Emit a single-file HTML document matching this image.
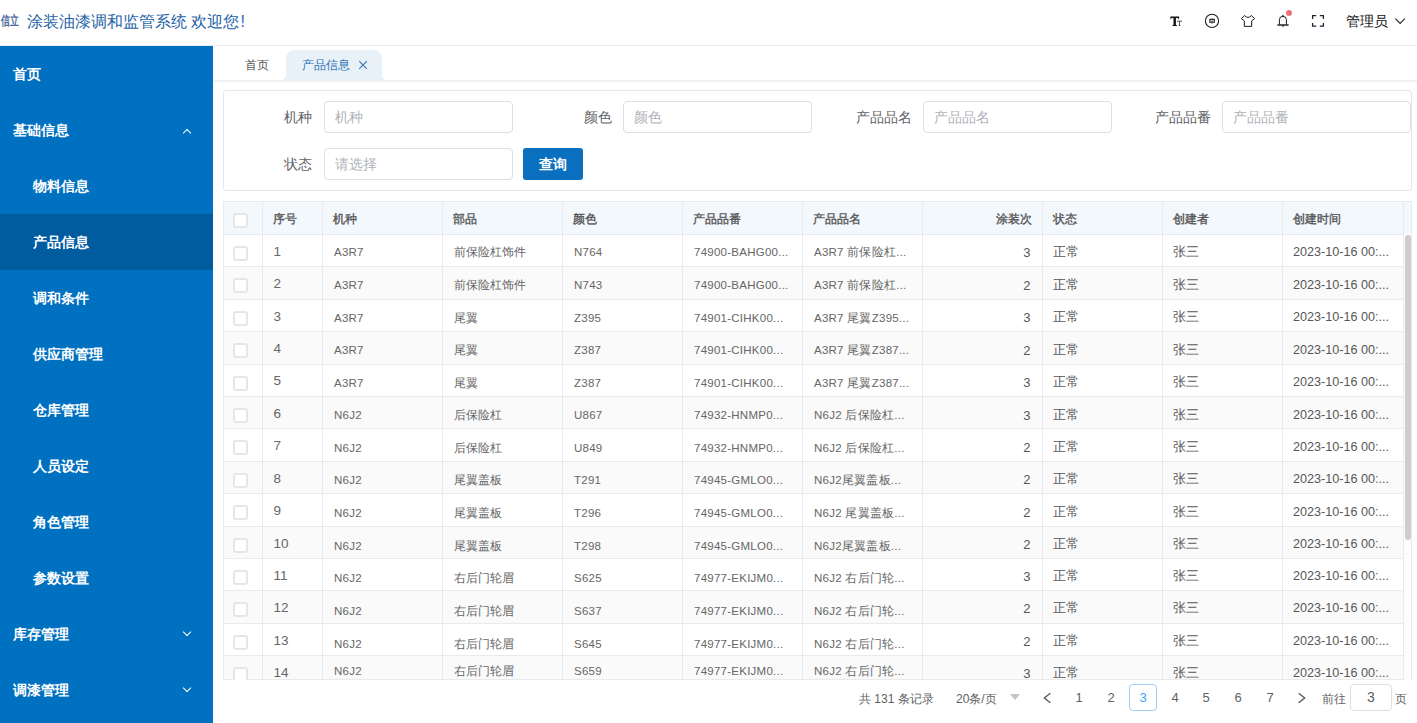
<!DOCTYPE html>
<html><head><meta charset="utf-8">
<style>
*{box-sizing:border-box;margin:0;padding:0}
html,body{width:1417px;height:723px;overflow:hidden;background:#fff;font-family:"Liberation Sans",sans-serif;color:#606266}
.abs{position:absolute}
#hdr{position:absolute;left:0;top:0;width:1417px;height:46px;border-bottom:1px solid #e8ebef;background:#fff}
#logo{position:absolute;left:1px;top:12px;font-size:13px;line-height:18px;font-weight:bold;color:#4a6898;transform:scaleX(0.68);transform-origin:0 0}
#title{position:absolute;left:26.5px;top:11.5px;font-size:16px;color:#2563a6;line-height:20px;white-space:nowrap}
#side{position:absolute;left:0;top:46px;width:213px;height:677px;background:#0070c0}
.mi{position:absolute;left:0;width:213px;height:56px;line-height:56px;color:#fff;font-size:14px;font-weight:600;padding-left:13px}
.mi.sub{padding-left:33px}
.mi.act{background:#005b9f}
.chev{position:absolute;left:183.5px;width:6px;height:6px;border-left:1px solid #fff;border-top:1px solid #fff}
#tabs{position:absolute;left:213px;top:46px;width:1204px;height:34px;background:#fff}
#tabsh{position:absolute;left:213px;top:80px;width:1204px;height:4px;background:linear-gradient(#eaeef3,#f6f8fa 50%,#fff)}
.tab{position:absolute;top:4px;height:30px;line-height:30px;font-size:12px}
.tab2f{position:absolute;bottom:0;width:6px;height:6px}
#tab1{left:32px;color:#555}
#tab2{left:73px;width:96px;top:4px;background:#e8f0f8;border-radius:8px 8px 0 0;color:#2d73b6;padding-left:16px}
#card{position:absolute;left:223px;top:90px;width:1189px;height:101px;border:1px solid #e4e7ed;border-radius:3px;background:#fff}
.lbl{position:absolute;font-size:14px;color:#606266;line-height:32px;text-align:right;white-space:nowrap}
.inp{position:absolute;width:189px;height:32px;border:1px solid #dcdfe6;border-radius:4px;font-size:14px;color:#b0b3b9;line-height:30px;padding-left:10px;white-space:nowrap}
#btn{position:absolute;left:299px;top:57px;width:60px;height:32px;border-radius:3px;background:#0a6fbe;color:#fff;font-size:14px;font-weight:bold;line-height:32px;text-align:center}
#tbl{position:absolute;left:223px;top:201px;width:1189px;height:479px;overflow:hidden;background:#fff}
.rb{position:absolute;left:0;width:1180px;height:33px}
.hb{position:absolute;left:0;top:0;width:1189px;height:33px;background:#f3f8fd}
.hl{position:absolute;left:0;width:1189px;height:1px;background:#e9eaec;z-index:2}
.vl{position:absolute;top:0;width:1px;height:479px;background:#e9eaec;z-index:2}
.ht{position:absolute;top:1.5px;line-height:33px;font-size:12px;font-weight:normal;-webkit-text-stroke:0.35px #555;color:#555;white-space:nowrap;z-index:3}
.cb{position:absolute;width:15px;height:15px;border:2px solid #e6e6e6;border-radius:3px;background:#fff;z-index:3}
.td{position:absolute;line-height:33px;font-size:12.6px;color:#575757;white-space:nowrap;z-index:3}
.td.idx{font-size:13.5px;color:#666}
.td.c1{font-size:11.5px;letter-spacing:0.25px;color:#666;margin-top:-1px}
.td.c2{font-size:11.5px;letter-spacing:0px;color:#666;margin-top:-1px}
.td.num{font-size:13px}
#gut{position:absolute;left:1181px;top:34px;width:7px;height:445px;background:#fdfdfd;z-index:4}
#thumb{position:absolute;left:1182px;top:34px;width:6px;height:305px;background:#cdcdcd;border-radius:3px;z-index:5}
.pg{position:absolute;top:685px;height:27px;line-height:28px;font-size:12px;color:#606266;white-space:nowrap}
.pn{position:absolute;top:684px;width:28px;height:27px;line-height:27px;text-align:center;font-size:13px;color:#606266}
</style></head><body>
<div id="hdr">
  <div id="logo">信立</div>
  <div id="title">涂装油漆调和监管系统 欢迎您<span style="margin-left:1.5px">!</span></div>
  <svg style="position:absolute;left:0;top:0" width="1417" height="46" viewBox="0 0 1417 46">
  <g fill="#111">
    <path d="M1170.4 16.6H1179.1V19.2H1178.5L1178.1 17.9H1175.9V25.0L1177.0 25.3V26.1H1172.4V25.3L1173.5 25.0V17.9H1171.4L1171.0 19.2H1170.4Z"/>
    <path d="M1177.0 20.8H1182.0V22.1H1181.7L1181.5 21.5H1179.9V25.3L1180.4 25.4V26H1178.6V25.4L1179.1 25.3V21.5H1177.5L1177.3 22.1H1177.0Z" fill="#333"/>
  </g>
  <circle cx="1212" cy="20.9" r="6.6" fill="none" stroke="#1a1a2a" stroke-width="1.05"/>
  <rect x="1209.9" y="19.4" width="4.4" height="2.8" fill="none" stroke="#2a2a2a" stroke-width="1.2"/>
  <line x1="1212.1" y1="18" x2="1212.1" y2="24" stroke="#444" stroke-width="0.7"/>
  <path d="M1244.6 15.6L1241.3 18.6L1244.3 20.8V26.4H1251.7V20.8L1254.7 18.6L1251.4 15.6Q1248 19.2 1244.6 15.6Z" fill="none" stroke="#1a1a2a" stroke-width="1.0" stroke-linejoin="round"/>
  <path d="M1279.4 24.5V19.6Q1279.4 16.4 1282.9 16.4Q1286.4 16.4 1286.4 19.6V24.5" fill="none" stroke="#1a1a1a" stroke-width="1.0"/>
  <rect x="1277.2" y="24.3" width="11.6" height="1.5" rx="0.7" fill="#222"/>
  <circle cx="1282.9" cy="15.9" r="0.9" fill="#1a1a1a"/>
  <rect x="1282.2" y="25.5" width="1.4" height="1.2" fill="#1a1a1a"/>
  <circle cx="1289" cy="12.9" r="2.9" fill="#f26b74"/>
  <path d="M1312.6 19V15.7H1316.2M1319.8 15.7H1323.4V19M1323.4 22.9V26.2H1319.8M1316.2 26.2H1312.6V22.9" fill="none" stroke="#2a1f33" stroke-width="1.3"/>
  <path d="M1395.4 18.6L1400.1 23.4L1404.8 18.6" fill="none" stroke="#222" stroke-width="1.1"/>
</svg>
<div style="position:absolute;left:1346px;top:11px;font-size:14px;line-height:20px;color:#111">管理员</div>

</div>
<div id="side">
  <div class="mi" style="top:0">首页</div>
  <div class="mi" style="top:56px">基础信息</div>
  <div class="chev" style="top:84px;transform:rotate(45deg)"></div>
  <div class="mi sub" style="top:112px">物料信息</div>
  <div class="mi sub act" style="top:168px">产品信息</div>
  <div class="mi sub" style="top:224px">调和条件</div>
  <div class="mi sub" style="top:280px">供应商管理</div>
  <div class="mi sub" style="top:336px">仓库管理</div>
  <div class="mi sub" style="top:392px">人员设定</div>
  <div class="mi sub" style="top:448px">角色管理</div>
  <div class="mi sub" style="top:504px">参数设置</div>
  <div class="mi" style="top:560px">库存管理</div>
  <div class="chev" style="top:583px;transform:rotate(225deg)"></div>
  <div class="mi" style="top:616px">调漆管理</div>
  <div class="chev" style="top:639px;transform:rotate(225deg)"></div>
</div>
<div id="tabs">
  <div class="tab" id="tab1">首页</div>
  <div class="tab" id="tab2">产品信息<svg style="position:absolute;left:72px;top:10px" width="10" height="10" viewBox="0 0 10 10"><path d="M1.2 1.2L8.8 8.8M8.8 1.2L1.2 8.8" stroke="#2d73b6" stroke-width="1.1"/></svg><div class="tab2f" style="left:-6px;background:radial-gradient(circle at 0 0,transparent 6px,#e8f0f8 6.5px)"></div><div class="tab2f" style="right:-6px;background:radial-gradient(circle at 100% 0,transparent 6px,#e8f0f8 6.5px)"></div></div>
</div>
<div id="tabsh"></div>
<div id="card">
  <div class="lbl" style="left:0;width:88px;top:10px">机种</div>
  <div class="inp" style="left:100px;top:10px">机种</div>
  <div class="lbl" style="left:300px;width:88px;top:10px">颜色</div>
  <div class="inp" style="left:399px;top:10px">颜色</div>
  <div class="lbl" style="left:600px;width:88px;top:10px">产品品名</div>
  <div class="inp" style="left:699px;top:10px">产品品名</div>
  <div class="lbl" style="left:899px;width:88px;top:10px">产品品番</div>
  <div class="inp" style="left:998px;top:10px">产品品番</div>
  <div class="lbl" style="left:0;width:88px;top:57px">状态</div>
  <div class="inp" style="left:100px;top:57px">请选择</div>
  <div id="btn">查询</div>
</div>
<div id="tbl">
<div class="rb" style="top:34px;height:32px;background:#fff"></div>
<div class="rb" style="top:66px;height:33px;background:#fafafa"></div>
<div class="rb" style="top:99px;height:32px;background:#fff"></div>
<div class="rb" style="top:131px;height:33px;background:#fafafa"></div>
<div class="rb" style="top:164px;height:32px;background:#fff"></div>
<div class="rb" style="top:196px;height:32px;background:#fafafa"></div>
<div class="rb" style="top:228px;height:33px;background:#fff"></div>
<div class="rb" style="top:261px;height:32px;background:#fafafa"></div>
<div class="rb" style="top:293px;height:33px;background:#fff"></div>
<div class="rb" style="top:326px;height:32px;background:#fafafa"></div>
<div class="rb" style="top:358px;height:32px;background:#fff"></div>
<div class="rb" style="top:390px;height:33px;background:#fafafa"></div>
<div class="rb" style="top:423px;height:32px;background:#fff"></div>
<div class="rb" style="top:455px;height:24px;background:#fafafa"></div>
<div class="hb"></div>
<div class="hl" style="top:0"></div>
<div class="hl" style="top:33px;width:1180px"></div>
<div class="hl" style="top:65px;width:1180px"></div>
<div class="hl" style="top:98px;width:1180px"></div>
<div class="hl" style="top:130px;width:1180px"></div>
<div class="hl" style="top:163px;width:1180px"></div>
<div class="hl" style="top:195px;width:1180px"></div>
<div class="hl" style="top:227px;width:1180px"></div>
<div class="hl" style="top:260px;width:1180px"></div>
<div class="hl" style="top:292px;width:1180px"></div>
<div class="hl" style="top:325px;width:1180px"></div>
<div class="hl" style="top:357px;width:1180px"></div>
<div class="hl" style="top:389px;width:1180px"></div>
<div class="hl" style="top:422px;width:1180px"></div>
<div class="hl" style="top:454px;width:1180px"></div>
<div class="hl" style="top:478px"></div>
<div class="vl" style="left:0px"></div>
<div class="vl" style="left:39px"></div>
<div class="vl" style="left:99px"></div>
<div class="vl" style="left:219px"></div>
<div class="vl" style="left:339px"></div>
<div class="vl" style="left:459px"></div>
<div class="vl" style="left:579px"></div>
<div class="vl" style="left:699px"></div>
<div class="vl" style="left:819px"></div>
<div class="vl" style="left:939px"></div>
<div class="vl" style="left:1059px"></div>
<div class="vl" style="left:1180px"></div>
<div class="vl" style="left:1188px"></div>
<div class="cb" style="left:10px;top:11.5px"></div>
<div class="ht" style="left:50px">序号</div>
<div class="ht" style="left:110px">机种</div>
<div class="ht" style="left:230px">部品</div>
<div class="ht" style="left:350px">颜色</div>
<div class="ht" style="left:470px">产品品番</div>
<div class="ht" style="left:590px">产品品名</div>
<div class="ht" style="left:689px;width:120px;text-align:right">涂装次</div>
<div class="ht" style="left:830px">状态</div>
<div class="ht" style="left:950px">创建者</div>
<div class="ht" style="left:1070px">创建时间</div>
<div class="cb" style="left:10px;top:44.5px"></div>
<div class="td idx" style="left:50.5px;top:34.00px">1</div>
<div class="td c1" style="left:111px;top:35.70px">A3R7</div>
<div class="td c2" style="left:231px;top:35.70px">前保险杠饰件</div>
<div class="td c1" style="left:351px;top:35.70px">N764</div>
<div class="td c1" style="left:471px;top:35.70px">74900-BAHG00...</div>
<div class="td c1" style="left:591px;top:35.70px">A3R7 前保险杠...</div>
<div class="td num" style="left:689px;width:118.5px;text-align:right;top:35.30px">3</div>
<div class="td n" style="left:830px;top:35.30px">正常</div>
<div class="td n" style="left:950px;top:35.30px">张三</div>
<div class="td n" style="left:1070px;top:35.30px">2023-10-16 00:...</div>
<div class="cb" style="left:10px;top:76.5px"></div>
<div class="td idx" style="left:50.5px;top:66.46px">2</div>
<div class="td c1" style="left:111px;top:68.86px">A3R7</div>
<div class="td c2" style="left:231px;top:68.86px">前保险杠饰件</div>
<div class="td c1" style="left:351px;top:68.86px">N743</div>
<div class="td c1" style="left:471px;top:68.86px">74900-BAHG00...</div>
<div class="td c1" style="left:591px;top:68.86px">A3R7 前保险杠...</div>
<div class="td num" style="left:689px;width:118.5px;text-align:right;top:67.66px">2</div>
<div class="td n" style="left:830px;top:67.66px">正常</div>
<div class="td n" style="left:950px;top:67.66px">张三</div>
<div class="td n" style="left:1070px;top:67.66px">2023-10-16 00:...</div>
<div class="cb" style="left:10px;top:109.5px"></div>
<div class="td idx" style="left:50.5px;top:98.92px">3</div>
<div class="td c1" style="left:111px;top:102.12px">A3R7</div>
<div class="td c2" style="left:231px;top:102.12px">尾翼</div>
<div class="td c1" style="left:351px;top:102.12px">Z395</div>
<div class="td c1" style="left:471px;top:102.12px">74901-CIHK00...</div>
<div class="td c1" style="left:591px;top:102.12px">A3R7 尾翼Z395...</div>
<div class="td num" style="left:689px;width:118.5px;text-align:right;top:100.12px">3</div>
<div class="td n" style="left:830px;top:100.12px">正常</div>
<div class="td n" style="left:950px;top:100.12px">张三</div>
<div class="td n" style="left:1070px;top:100.12px">2023-10-16 00:...</div>
<div class="cb" style="left:10px;top:141.5px"></div>
<div class="td idx" style="left:50.5px;top:130.78px">4</div>
<div class="td c1" style="left:111px;top:134.38px">A3R7</div>
<div class="td c2" style="left:231px;top:134.38px">尾翼</div>
<div class="td c1" style="left:351px;top:134.38px">Z387</div>
<div class="td c1" style="left:471px;top:134.38px">74901-CIHK00...</div>
<div class="td c1" style="left:591px;top:134.38px">A3R7 尾翼Z387...</div>
<div class="td num" style="left:689px;width:118.5px;text-align:right;top:132.58px">2</div>
<div class="td n" style="left:830px;top:132.58px">正常</div>
<div class="td n" style="left:950px;top:132.58px">张三</div>
<div class="td n" style="left:1070px;top:132.58px">2023-10-16 00:...</div>
<div class="cb" style="left:10px;top:174.5px"></div>
<div class="td idx" style="left:50.5px;top:163.24px">5</div>
<div class="td c1" style="left:111px;top:166.64px">A3R7</div>
<div class="td c2" style="left:231px;top:166.64px">尾翼</div>
<div class="td c1" style="left:351px;top:166.64px">Z387</div>
<div class="td c1" style="left:471px;top:166.64px">74901-CIHK00...</div>
<div class="td c1" style="left:591px;top:166.64px">A3R7 尾翼Z387...</div>
<div class="td num" style="left:689px;width:118.5px;text-align:right;top:165.04px">3</div>
<div class="td n" style="left:830px;top:165.04px">正常</div>
<div class="td n" style="left:950px;top:165.04px">张三</div>
<div class="td n" style="left:1070px;top:165.04px">2023-10-16 00:...</div>
<div class="cb" style="left:10px;top:206.5px"></div>
<div class="td idx" style="left:50.5px;top:195.70px">6</div>
<div class="td c1" style="left:111px;top:199.30px">N6J2</div>
<div class="td c2" style="left:231px;top:199.30px">后保险杠</div>
<div class="td c1" style="left:351px;top:199.30px">U867</div>
<div class="td c1" style="left:471px;top:199.30px">74932-HNMP0...</div>
<div class="td c1" style="left:591px;top:199.30px">N6J2 后保险杠...</div>
<div class="td num" style="left:689px;width:118.5px;text-align:right;top:197.50px">3</div>
<div class="td n" style="left:830px;top:197.50px">正常</div>
<div class="td n" style="left:950px;top:197.50px">张三</div>
<div class="td n" style="left:1070px;top:197.50px">2023-10-16 00:...</div>
<div class="cb" style="left:10px;top:238.5px"></div>
<div class="td idx" style="left:50.5px;top:228.16px">7</div>
<div class="td c1" style="left:111px;top:231.76px">N6J2</div>
<div class="td c2" style="left:231px;top:231.76px">后保险杠</div>
<div class="td c1" style="left:351px;top:231.76px">U849</div>
<div class="td c1" style="left:471px;top:231.76px">74932-HNMP0...</div>
<div class="td c1" style="left:591px;top:231.76px">N6J2 后保险杠...</div>
<div class="td num" style="left:689px;width:118.5px;text-align:right;top:229.96px">2</div>
<div class="td n" style="left:830px;top:229.96px">正常</div>
<div class="td n" style="left:950px;top:229.96px">张三</div>
<div class="td n" style="left:1070px;top:229.96px">2023-10-16 00:...</div>
<div class="cb" style="left:10px;top:271.5px"></div>
<div class="td idx" style="left:50.5px;top:260.62px">8</div>
<div class="td c1" style="left:111px;top:264.22px">N6J2</div>
<div class="td c2" style="left:231px;top:264.22px">尾翼盖板</div>
<div class="td c1" style="left:351px;top:264.22px">T291</div>
<div class="td c1" style="left:471px;top:264.22px">74945-GMLO0...</div>
<div class="td c1" style="left:591px;top:264.22px">N6J2尾翼盖板...</div>
<div class="td num" style="left:689px;width:118.5px;text-align:right;top:262.32px">2</div>
<div class="td n" style="left:830px;top:262.32px">正常</div>
<div class="td n" style="left:950px;top:262.32px">张三</div>
<div class="td n" style="left:1070px;top:262.32px">2023-10-16 00:...</div>
<div class="cb" style="left:10px;top:303.5px"></div>
<div class="td idx" style="left:50.5px;top:293.08px">9</div>
<div class="td c1" style="left:111px;top:296.88px">N6J2</div>
<div class="td c2" style="left:231px;top:296.88px">尾翼盖板</div>
<div class="td c1" style="left:351px;top:296.88px">T296</div>
<div class="td c1" style="left:471px;top:296.88px">74945-GMLO0...</div>
<div class="td c1" style="left:591px;top:296.88px">N6J2 尾翼盖板...</div>
<div class="td num" style="left:689px;width:118.5px;text-align:right;top:294.78px">2</div>
<div class="td n" style="left:830px;top:294.78px">正常</div>
<div class="td n" style="left:950px;top:294.78px">张三</div>
<div class="td n" style="left:1070px;top:294.78px">2023-10-16 00:...</div>
<div class="cb" style="left:10px;top:336.5px"></div>
<div class="td idx" style="left:50.5px;top:325.54px">10</div>
<div class="td c1" style="left:111px;top:329.54px">N6J2</div>
<div class="td c2" style="left:231px;top:329.54px">尾翼盖板</div>
<div class="td c1" style="left:351px;top:329.54px">T298</div>
<div class="td c1" style="left:471px;top:329.54px">74945-GMLO0...</div>
<div class="td c1" style="left:591px;top:329.54px">N6J2尾翼盖板...</div>
<div class="td num" style="left:689px;width:118.5px;text-align:right;top:327.24px">2</div>
<div class="td n" style="left:830px;top:327.24px">正常</div>
<div class="td n" style="left:950px;top:327.24px">张三</div>
<div class="td n" style="left:1070px;top:327.24px">2023-10-16 00:...</div>
<div class="cb" style="left:10px;top:368.5px"></div>
<div class="td idx" style="left:50.5px;top:358.00px">11</div>
<div class="td c1" style="left:111px;top:362.20px">N6J2</div>
<div class="td c2" style="left:231px;top:362.20px">右后门轮眉</div>
<div class="td c1" style="left:351px;top:362.20px">S625</div>
<div class="td c1" style="left:471px;top:362.20px">74977-EKIJM0...</div>
<div class="td c1" style="left:591px;top:362.20px">N6J2 右后门轮...</div>
<div class="td num" style="left:689px;width:118.5px;text-align:right;top:359.30px">3</div>
<div class="td n" style="left:830px;top:359.30px">正常</div>
<div class="td n" style="left:950px;top:359.30px">张三</div>
<div class="td n" style="left:1070px;top:359.30px">2023-10-16 00:...</div>
<div class="cb" style="left:10px;top:400.5px"></div>
<div class="td idx" style="left:50.5px;top:390.46px">12</div>
<div class="td c1" style="left:111px;top:395.36px">N6J2</div>
<div class="td c2" style="left:231px;top:395.36px">右后门轮眉</div>
<div class="td c1" style="left:351px;top:395.36px">S637</div>
<div class="td c1" style="left:471px;top:395.36px">74977-EKIJM0...</div>
<div class="td c1" style="left:591px;top:395.36px">N6J2 右后门轮...</div>
<div class="td num" style="left:689px;width:118.5px;text-align:right;top:391.06px">2</div>
<div class="td n" style="left:830px;top:391.06px">正常</div>
<div class="td n" style="left:950px;top:391.06px">张三</div>
<div class="td n" style="left:1070px;top:391.06px">2023-10-16 00:...</div>
<div class="cb" style="left:10px;top:433.5px"></div>
<div class="td idx" style="left:50.5px;top:422.92px">13</div>
<div class="td c1" style="left:111px;top:428.12px">N6J2</div>
<div class="td c2" style="left:231px;top:428.12px">右后门轮眉</div>
<div class="td c1" style="left:351px;top:428.12px">S645</div>
<div class="td c1" style="left:471px;top:428.12px">74977-EKIJM0...</div>
<div class="td c1" style="left:591px;top:428.12px">N6J2 右后门轮...</div>
<div class="td num" style="left:689px;width:118.5px;text-align:right;top:423.52px">2</div>
<div class="td n" style="left:830px;top:423.52px">正常</div>
<div class="td n" style="left:950px;top:423.52px">张三</div>
<div class="td n" style="left:1070px;top:423.52px">2023-10-16 00:...</div>
<div class="cb" style="left:10px;top:465.5px"></div>
<div class="td idx" style="left:50.5px;top:454.98px">14</div>
<div class="td c1" style="left:111px;top:455.28px">N6J2</div>
<div class="td c2" style="left:231px;top:455.28px">右后门轮眉</div>
<div class="td c1" style="left:351px;top:455.28px">S659</div>
<div class="td c1" style="left:471px;top:455.28px">74977-EKIJM0...</div>
<div class="td c1" style="left:591px;top:455.28px">N6J2 右后门轮...</div>
<div class="td num" style="left:689px;width:118.5px;text-align:right;top:455.58px">3</div>
<div class="td n" style="left:830px;top:455.58px">正常</div>
<div class="td n" style="left:950px;top:455.58px">张三</div>
<div class="td n" style="left:1070px;top:455.58px">2023-10-16 00:...</div>
<div id="gut"></div>
<div id="thumb"></div>
</div>
<div class="pg" style="left:859px">共 131 条记录</div>
<div class="pg" style="left:956px">20条/页</div>
<div class="abs" style="left:1010px;top:694px;width:0;height:0;border-left:5px solid transparent;border-right:5px solid transparent;border-top:6px solid #c0c4cc"></div>
<svg class="abs" style="left:1040px;top:690px" width="14" height="16" viewBox="0 0 14 16"><path d="M10.3 3.3L4.3 8L10.3 12.7" fill="none" stroke="#555" stroke-width="1.3"/></svg>
<div class="pn" style="left:1065px">1</div>
<div class="pn" style="left:1097px">2</div>
<div class="pn" style="left:1129px;border:1px solid #a3cdf5;border-radius:4px;color:#409eff;line-height:25px">3</div>
<div class="pn" style="left:1161px">4</div>
<div class="pn" style="left:1192px">5</div>
<div class="pn" style="left:1224px">6</div>
<div class="pn" style="left:1256px">7</div>
<svg class="abs" style="left:1295px;top:690px" width="14" height="16" viewBox="0 0 14 16"><path d="M3.7 3.3L9.7 8L3.7 12.7" fill="none" stroke="#555" stroke-width="1.3"/></svg>
<div class="pg" style="left:1322px">前往</div>
<div class="abs" style="left:1350px;top:684px;width:42px;height:27px;border:1px solid #dcdfe6;border-radius:4px;text-align:center;line-height:25px;font-size:14px;color:#606266">3</div>
<div class="pg" style="left:1395px">页</div>
</body></html>
